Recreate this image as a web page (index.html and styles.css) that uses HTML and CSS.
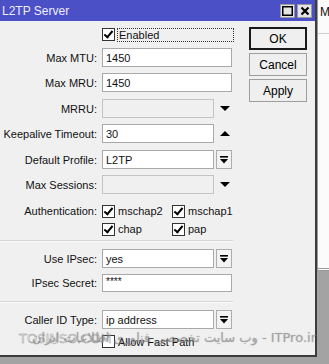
FILE: index.html
```html
<!DOCTYPE html>
<html lang="en">

<head>
    <meta charset="UTF-8">
    <meta name="viewport" content="width=device-width, initial-scale=1.0">
    <title>L2TP Server</title>
    <link rel="stylesheet" href="styles.css">
</head>

<body>
    <div class="desktop">
        <div class="window">
            <div class="titlebar">
                <span class="title">L2TP Server</span>
                <span class="tbtn">
                    <svg width="11" height="10" viewBox="0 0 11 10"><rect x="0.75" y="0.75" width="9.5" height="8.5" fill="none" stroke="#000" stroke-width="1.5"/></svg>
                </span>
                <span class="tbtn">
                    <svg width="10" height="10" viewBox="0 0 10 10"><path d="M1.5 1.5 L8.5 8.5 M8.5 1.5 L1.5 8.5" stroke="#000" stroke-width="2.2"/></svg>
                </span>
            </div>

            <div class="content">
                <div class="form">
                    <div class="row r-enabled">
                        <span></span>
                        <div class="check focus">
                            <span class="box on"></span>
                            <span>Enabled</span>
                        </div>
                    </div>

                    <div class="row r-mtu">
                        <label>Max MTU:</label>
                        <div class="field"><span class="input full">1450</span></div>
                    </div>

                    <div class="row r-mru">
                        <label>Max MRU:</label>
                        <div class="field"><span class="input full">1450</span></div>
                    </div>

                    <div class="row r-mrru">
                        <label>MRRU:</label>
                        <div class="field">
                            <span class="input short disabled"></span>
                            <span class="arrow down"></span>
                        </div>
                    </div>

                    <div class="row r-keep">
                        <label>Keepalive Timeout:</label>
                        <div class="field">
                            <span class="input short">30</span>
                            <span class="arrow up"></span>
                        </div>
                    </div>

                    <div class="row r-profile">
                        <label>Default Profile:</label>
                        <div class="field">
                            <span class="input short">L2TP</span>
                            <span class="drop"><svg width="8" height="8" viewBox="0 0 8 8"><rect x="0" y="0" width="8" height="1.6" fill="#000"/><polygon points="0,3 8,3 4,7.5" fill="#000"/></svg></span>
                        </div>
                    </div>

                    <div class="row r-sess">
                        <label>Max Sessions:</label>
                        <div class="field">
                            <span class="input short disabled"></span>
                            <span class="arrow down"></span>
                        </div>
                    </div>

                    <div class="row r-auth">
                        <label>Authentication:</label>
                        <div class="checks">
                            <div class="check"><span class="box on"></span><span>mschap2</span></div>
                            <div class="check"><span class="box on"></span><span>mschap1</span></div>
                        </div>
                    </div>

                    <div class="row r-auth2">
                        <span></span>
                        <div class="checks">
                            <div class="check"><span class="box on"></span><span>chap</span></div>
                            <div class="check"><span class="box on"></span><span>pap</span></div>
                        </div>
                    </div>

                    <div class="sep sep1"></div>

                    <div class="row r-ipsec">
                        <label>Use IPsec:</label>
                        <div class="field">
                            <span class="input short">yes</span>
                            <span class="drop"><svg width="8" height="8" viewBox="0 0 8 8"><rect x="0" y="0" width="8" height="1.6" fill="#000"/><polygon points="0,3 8,3 4,7.5" fill="#000"/></svg></span>
                        </div>
                    </div>

                    <div class="row r-secret">
                        <label>IPsec Secret:</label>
                        <div class="field"><span class="input full secret">****</span></div>
                    </div>

                    <div class="sep sep2"></div>

                    <div class="row r-caller">
                        <label>Caller ID Type:</label>
                        <div class="field">
                            <span class="input short">ip address</span>
                            <span class="drop"><svg width="8" height="8" viewBox="0 0 8 8"><rect x="0" y="0" width="8" height="1.6" fill="#000"/><polygon points="0,3 8,3 4,7.5" fill="#000"/></svg></span>
                        </div>
                    </div>

                    <div class="row r-fast">
                        <span></span>
                        <div class="check"><span class="box"></span><span>Allow Fast Path</span></div>
                    </div>
                </div>

                <div class="buttons">
                    <button type="button" class="btn default">OK</button>
                    <button type="button" class="btn">Cancel</button>
                    <button type="button" class="btn">Apply</button>
                </div>
            </div>

            <div class="watermark">
                <span class="wm-fa" dir="rtl">ITPro.ir - وب سایت تخصصی فناوری اطلاعات ایران</span>
                <span class="wm-en">TOSINSO.COM</span>
            </div>
        </div>

        <div class="side">
            <div class="side-panel">
                <div class="side-head">M</div>
            </div>
        </div>
    </div>
</body>

</html>
```
FILE: styles.css
```css
body {
    margin: 0;
    background-color: #a3a3a3;
    font-family: 'Liberation Sans', Arial, sans-serif;
    font-size: 11px;
    color: #111;
}

.desktop {
    display: flex;
    width: 329px;
    height: 364px;
    overflow: hidden;
}

.window {
    position: relative;
    width: 315px;
    height: 355px;
    background-color: #f0f0f0;
    border-right: 2px solid #3c3c3c;
    border-bottom: 2px solid #3c3c3c;
    flex-shrink: 0;
}

.titlebar {
    height: 21px;
    background-color: #4b50c6;
    display: flex;
    align-items: center;
    padding: 0 3px 0 2px;
}

.title {
    color: #eeeefa;
    font-size: 12px;
    flex: 1;
}

.tbtn {
    width: 15px;
    height: 14px;
    box-sizing: border-box;
    margin-left: 2px;
    background-color: #e4e4e4;
    border: 1px solid #9a9a9a;
    display: flex;
    align-items: center;
    justify-content: center;
}

.content {
    display: flex;
}

.form {
    width: 233px;
    padding-top: 7px;
    display: flex;
    flex-direction: column;
}

.row {
    display: grid;
    grid-template-columns: 97px 1fr;
    column-gap: 5px;
    align-items: center;
    height: 19px;
}

.row label {
    text-align: right;
    white-space: nowrap;
}

.r-enabled { height: 13px; }
.r-mtu { margin-top: 7px; }
.r-mru { margin-top: 6px; }
.r-mrru { margin-top: 7px; }
.r-keep { margin-top: 6px; }
.r-profile { margin-top: 7px; }
.r-sess { margin-top: 6px; }
.r-auth { margin-top: 10px; height: 14px; }
.r-auth2 { margin-top: 4px; height: 14px; }
.r-ipsec { margin-top: 7px; }
.r-secret { margin-top: 6px; height: 18px; }
.r-caller { margin-top: 7px; }
.r-fast { margin-top: 6px; height: 13px; }

.sep {
    height: 1px;
    background-color: #d6d6d6;
    border-bottom: 1px solid #fafafa;
}

.sep1 { margin-top: 4px; }
.sep2 { margin-top: 9px; }

.field {
    display: flex;
    align-items: center;
    height: 100%;
}

.input {
    height: 100%;
    box-sizing: border-box;
    background-color: #fff;
    border: 1px solid #a9a9a9;
    padding: 0 3px;
    display: flex;
    align-items: center;
    white-space: nowrap;
}

.input.full { width: 130px; }
.input.short { width: 112px; }

.input.disabled {
    background-color: #f0f0f0;
    border-color: #c4c4c4;
}

.input.secret {
    font-size: 10px;
    padding-bottom: 3px;
}

.drop {
    width: 16px;
    height: 100%;
    box-sizing: border-box;
    margin-left: 2px;
    border: 1px solid #adadad;
    background-color: #f3f3f3;
    display: flex;
    align-items: center;
    justify-content: center;
}

.arrow {
    width: 0;
    height: 0;
    margin-left: 6px;
    border-left: 5px solid transparent;
    border-right: 5px solid transparent;
}

.arrow.down { border-top: 5px solid #000; }
.arrow.up { border-bottom: 5px solid #000; }

.checks {
    display: flex;
}

.checks .check {
    width: 70px;
}

.check {
    display: flex;
    align-items: center;
    gap: 3px;
    white-space: nowrap;
}

.check.focus {
    width: 131px;
}

.check.focus span:last-child {
    flex: 1;
    outline: 1px dotted #333;
    outline-offset: 0;
    padding-left: 1px;
    line-height: 12px;
}

.box {
    width: 13px;
    height: 13px;
    box-sizing: border-box;
    border: 1px solid #333;
    background-color: #fff;
    flex-shrink: 0;
    position: relative;
}

.box.on::after {
    content: "";
    position: absolute;
    left: 3px;
    top: 0px;
    width: 3px;
    height: 7px;
    border-right: 2px solid #000;
    border-bottom: 2px solid #000;
    transform: rotate(40deg);
}

.buttons {
    margin-left: 16px;
    padding-top: 6px;
    display: flex;
    flex-direction: column;
    gap: 3px;
}

.btn {
    width: 58px;
    height: 23px;
    font-family: 'Liberation Sans', Arial, sans-serif;
    font-size: 12px;
    color: #000;
    background-color: #efefef;
    border: 1px solid #9e9e9e;
    padding: 0;
}

.btn.default {
    border: 1px solid #1a1a1a;
    box-shadow: inset 0 0 0 1px #1a1a1a;
}

.watermark {
    position: absolute;
    left: 0;
    top: 330px;
    width: 316px;
    height: 20px;
    pointer-events: none;
}

.wm-fa,
.wm-en {
    position: absolute;
    top: 0;
    white-space: nowrap;
}

.wm-fa {
    right: 0;
    font-family: 'DejaVu Sans', sans-serif;
    font-size: 13px;
    color: rgba(150, 150, 150, 0.5);
    text-shadow: 0 0 1px rgba(90, 90, 90, 0.5);
}

.wm-en {
    left: 19px;
    top: 1px;
    font-family: 'DejaVu Sans', sans-serif;
    font-size: 13px;
    color: rgba(240, 240, 240, 0.3);
    -webkit-text-stroke: 0.5px rgba(110, 110, 110, 0.7);
}

.side {
    flex: 1;
}

.side-panel {
    height: 268px;
    background-color: #fbfbfb;
    border-left: 1px solid #9a9a9a;
    border-bottom: 3px double #9a9a9a;
}

.side-head {
    height: 34px;
    border-bottom: 1px solid #d0d0d0;
    padding: 5px 0 0 2px;
    box-sizing: border-box;
    font-size: 12px;
}
```
